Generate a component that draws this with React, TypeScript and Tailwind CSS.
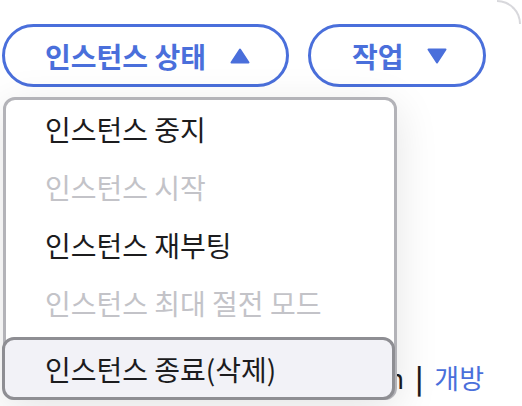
const font = { fontFamily: '"Noto Sans CJK KR", "Noto Sans", sans-serif' };

const Caret = ({ up }: { up?: boolean }) => (
  <svg width="20" height="16" viewBox="0 0 20 16" className="shrink-0">
    <path
      d={up ? "M10 1.5 L18.5 14.5 L1.5 14.5 Z" : "M1.5 1.5 L18.5 1.5 L10 14.5 Z"}
      fill="#4a6fdb"
      stroke="#4a6fdb"
      strokeWidth="2"
      strokeLinejoin="round"
    />
  </svg>
);

const items = [
  { label: "인스턴스 중지", disabled: false },
  { label: "인스턴스 시작", disabled: true },
  { label: "인스턴스 재부팅", disabled: false },
  { label: "인스턴스 최대 절전 모드", disabled: true },
];

export default function App() {
  return (
    <div className="relative w-[522px] h-[406px] overflow-hidden bg-white" style={font}>
      {/* corner of the card behind */}
      <div className="flex h-[24px] justify-end pr-[1px]">
        <div className="w-[24px] h-[24px] rounded-tr-[24px] border-t-2 border-r-2 border-[#d8d8dc]" />
      </div>

      <div className="flex gap-[19px] pl-[2px]">
        <button className="flex h-[63px] w-[287px] items-center gap-[24px] rounded-full border-[3px] border-[#4a6fdb] pl-[40px] text-[28px] font-bold text-[#4a6fdb]">
          <span>인스턴스 상태</span>
          <Caret up />
        </button>
        <button className="flex h-[63px] w-[178px] items-center gap-[23px] rounded-full border-[3px] border-[#4a6fdb] pl-[41px] text-[28px] font-bold text-[#4a6fdb]">
          <span>작업</span>
          <Caret />
        </button>
      </div>

      <div className="flex justify-end pr-[38px] pt-[271px] text-[27px] text-[#1c1c1e]">
        <span>Spot 인스턴스 정보 Learn</span>
        <span className="px-[11px] font-bold">|</span>
        <span className="text-[#4a6fdb]">개방</span>
      </div>

      {/* dropdown menu */}
      <div className="absolute left-[3px] top-[97px] w-[394px] rounded-[12px] border-[3px] border-[#b3b3b8] bg-white shadow-[0_10px_44px_rgba(0,0,0,0.11)]">
        {items.map((it) => (
          <div
            key={it.label}
            className={`flex h-[58px] items-center pl-[39px] text-[28px] ${it.disabled ? "text-[#c3c3c8]" : "text-[#1c1c1e]"}`}
          >
            {it.label}
          </div>
        ))}
        <div className="-mb-[3px] -ml-[4px] mt-[5px] flex h-[63px] w-[393px] items-center rounded-[12px] border-[3px] border-[#8e8e93] bg-[#f2f2f7] pl-[40px] text-[28px] text-[#1c1c1e]">
          인스턴스 종료(삭제)
        </div>
      </div>
    </div>
  );
}
